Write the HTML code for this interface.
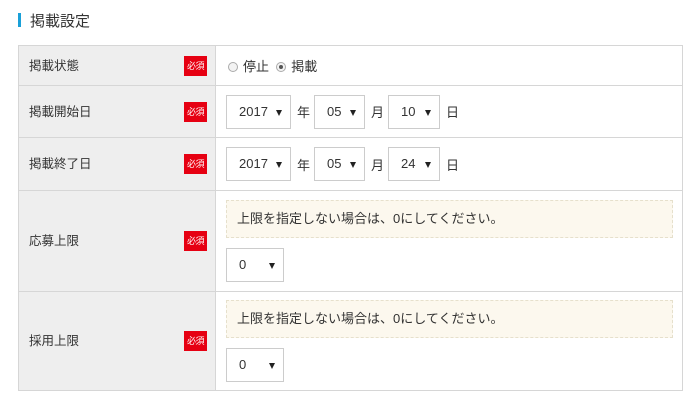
<!DOCTYPE html><html><head><meta charset="utf-8"><style>
*{box-sizing:border-box;margin:0;padding:0}
body{width:700px;height:400px;background:#fff;font-family:"Liberation Sans","Noto Sans CJK JP",sans-serif;color:#333;font-size:13px;position:relative;overflow:hidden}
.t{position:absolute;left:30px;top:10px;font-size:15px;color:#333}
.bar{position:absolute;left:18px;top:13px;width:3px;height:14px;background:#1aa0d8}
table{position:absolute;left:18px;top:45px;width:665px;border-collapse:collapse}
td{border:1px solid #d6d6d6;vertical-align:middle}
td.l{width:197px;background:#eee;padding-left:10px;position:relative;font-size:12.5px;padding-bottom:3px}
.b{position:absolute;left:165px;top:50%;margin-top:-10px;width:23px;height:20px;background:#e60012;color:#fff;font-size:9px;line-height:20px;text-align:center;letter-spacing:-0.5px}
td.r{padding-left:10px}
.s{display:inline-block;height:34px;border:1px solid #ccc;line-height:32px;padding-left:12px;position:relative;vertical-align:middle;background:#fff}
.s:after{content:"";position:absolute;right:8px;top:14px;border-left:3px solid transparent;border-right:3px solid transparent;border-top:6px solid #222}
.u{display:inline-block;margin:0 4px 0 6px;vertical-align:middle}
.n{height:38px;border:1px dashed #e6e0cc;background:#fcf8ee;line-height:36px;padding-left:10px;width:447px;margin-bottom:10px}
.rad{display:inline-block;width:10px;height:10px;border:1px solid #aaa;border-radius:50%;background:#f3f3f3;vertical-align:-1px;margin-right:5px;position:relative}
.rad.on:after{content:"";position:absolute;left:2px;top:2px;width:4px;height:4px;border-radius:50%;background:#555}
</style></head><body>
<div class="bar"></div><div class="t">掲載設定</div>
<table>
<tr style="height:40px"><td class="l">掲載状態<span class="b">必須</span></td><td class="r" style="padding-left:12px"><span class="rad"></span>停止 &nbsp;<span class="rad on"></span>掲載</td></tr>
<tr style="height:52px"><td class="l">掲載開始日<span class="b">必須</span></td><td class="r"><span class="s" style="width:65px">2017</span><span class="u">年</span><span class="s" style="width:51px">05</span><span class="u">月</span><span class="s" style="width:52px">10</span><span class="u">日</span></td></tr>
<tr style="height:53px"><td class="l">掲載終了日<span class="b">必須</span></td><td class="r"><span class="s" style="width:65px">2017</span><span class="u">年</span><span class="s" style="width:51px">05</span><span class="u">月</span><span class="s" style="width:52px">24</span><span class="u">日</span></td></tr>
<tr style="height:101px"><td class="l">応募上限<span class="b">必須</span></td><td class="r"><div class="n">上限を指定しない場合は、0にしてください。</div><span class="s" style="width:58px">0</span></td></tr>
<tr style="height:99px"><td class="l">採用上限<span class="b">必須</span></td><td class="r"><div class="n">上限を指定しない場合は、0にしてください。</div><span class="s" style="width:58px">0</span></td></tr>
</table>
</body></html>
